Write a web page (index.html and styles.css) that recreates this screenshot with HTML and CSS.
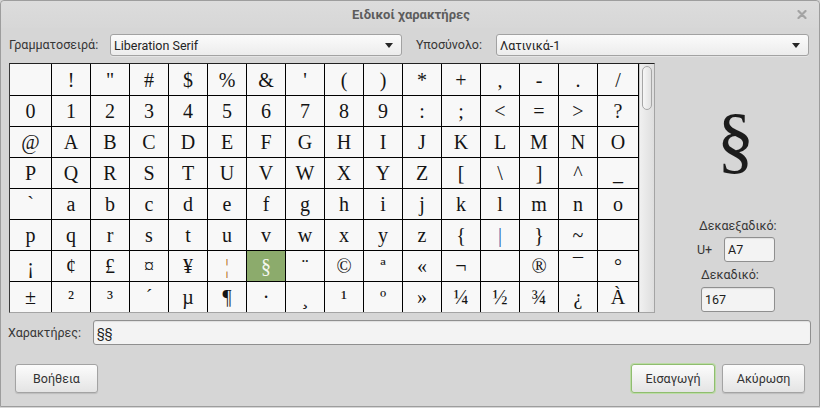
FILE: index.html
```html
<!DOCTYPE html>
<html lang="el">
<head>
<meta charset="utf-8">
<title>Ειδικοί χαρακτήρες</title>
<link rel="stylesheet" href="styles.css">
</head>
<body>
<div class="window">
  <div class="titlebar">
    <span class="title">Ειδικοί χαρακτήρες</span>
    <span class="close"><svg width="10" height="9" viewBox="0 0 10 9"><path d="M1.5 1 L8.5 8 M8.5 1 L1.5 8" stroke="#a3a3a3" stroke-width="2.2" stroke-linecap="round"/></svg></span>
  </div>
  <div class="toprow">
    <span class="lbl lbl-font">Γραμματοσειρά:</span>
    <div class="combo combo-font"><span>Liberation Serif</span><i class="arrow"></i></div>
    <span class="lbl lbl-subset">Υποσύνολο:</span>
    <div class="combo combo-subset"><span>Λατινικά-1</span><i class="arrow"></i></div>
  </div>
  <div class="main">
    <div class="charframe">
      <div class="chargrid">
        <div class="cell"></div><div class="cell">!</div><div class="cell">&quot;</div><div class="cell">#</div><div class="cell">$</div><div class="cell">%</div><div class="cell">&amp;</div><div class="cell">'</div><div class="cell">(</div><div class="cell">)</div><div class="cell">*</div><div class="cell">+</div><div class="cell">,</div><div class="cell">-</div><div class="cell">.</div><div class="cell">/</div>
        <div class="cell">0</div><div class="cell">1</div><div class="cell">2</div><div class="cell">3</div><div class="cell">4</div><div class="cell">5</div><div class="cell">6</div><div class="cell">7</div><div class="cell">8</div><div class="cell">9</div><div class="cell">:</div><div class="cell">;</div><div class="cell">&lt;</div><div class="cell">=</div><div class="cell">&gt;</div><div class="cell">?</div>
        <div class="cell">@</div><div class="cell">A</div><div class="cell">B</div><div class="cell">C</div><div class="cell">D</div><div class="cell">E</div><div class="cell">F</div><div class="cell">G</div><div class="cell">H</div><div class="cell">I</div><div class="cell">J</div><div class="cell">K</div><div class="cell">L</div><div class="cell">M</div><div class="cell">N</div><div class="cell">O</div>
        <div class="cell">P</div><div class="cell">Q</div><div class="cell">R</div><div class="cell">S</div><div class="cell">T</div><div class="cell">U</div><div class="cell">V</div><div class="cell">W</div><div class="cell">X</div><div class="cell">Y</div><div class="cell">Z</div><div class="cell">[</div><div class="cell">\</div><div class="cell">]</div><div class="cell">^</div><div class="cell">_</div>
        <div class="cell">`</div><div class="cell">a</div><div class="cell">b</div><div class="cell">c</div><div class="cell">d</div><div class="cell">e</div><div class="cell">f</div><div class="cell">g</div><div class="cell">h</div><div class="cell">i</div><div class="cell">j</div><div class="cell">k</div><div class="cell">l</div><div class="cell">m</div><div class="cell">n</div><div class="cell">o</div>
        <div class="cell">p</div><div class="cell">q</div><div class="cell">r</div><div class="cell">s</div><div class="cell">t</div><div class="cell">u</div><div class="cell">v</div><div class="cell">w</div><div class="cell">x</div><div class="cell">y</div><div class="cell">z</div><div class="cell">{</div><div class="cell tint-blue">|</div><div class="cell">}</div><div class="cell">~</div><div class="cell"></div>
        <div class="cell">¡</div><div class="cell">¢</div><div class="cell">£</div><div class="cell">¤</div><div class="cell">¥</div><div class="cell tint-orange">¦</div><div class="cell selected">§</div><div class="cell">¨</div><div class="cell">©</div><div class="cell">ª</div><div class="cell">«</div><div class="cell">¬</div><div class="cell"></div><div class="cell">®</div><div class="cell">¯</div><div class="cell">°</div>
        <div class="cell">±</div><div class="cell">²</div><div class="cell">³</div><div class="cell">´</div><div class="cell">µ</div><div class="cell">¶</div><div class="cell">·</div><div class="cell">¸</div><div class="cell">¹</div><div class="cell">º</div><div class="cell">»</div><div class="cell">¼</div><div class="cell">½</div><div class="cell">¾</div><div class="cell">¿</div><div class="cell">À</div>
      </div>
      <div class="scrollbar"><div class="thumb"></div></div>
    </div>
    <div class="side">
      <div class="preview">§</div>
      <span class="lbl lbl-hex">Δεκαεξαδικό:</span>
      <div class="hexrow"><span class="uplus">U+</span><div class="entry entry-hex">A7</div></div>
      <span class="lbl lbl-dec">Δεκαδικό:</span>
      <div class="entry entry-dec">167</div>
    </div>
  </div>
  <div class="charsrow">
    <span class="lbl lbl-chars">Χαρακτήρες:</span>
    <div class="entry entry-chars">§§</div>
  </div>
  <div class="buttons">
    <button class="btn">Βοήθεια</button>
    <span class="spacer"></span>
    <button class="btn btn-default">Εισαγωγή</button>
    <button class="btn">Ακύρωση</button>
  </div>
</div>
</body>
</html>
```

FILE: styles.css
```css
html, body {
  margin: 0;
  padding: 0;
  background: #d6d6d6;
}
body {
  font-family: Roboto, "Noto Sans", "DejaVu Sans", sans-serif;
  font-size: 12.5px;
  color: #363636;
}
.window {
  width: 820px;
  height: 407px;
  box-sizing: border-box;
  border: 1px solid #9d9d9d;
  border-radius: 4px 4px 0 0;
  background: #d6d6d6;
  display: flex;
  flex-direction: column;
}
.titlebar {
  height: 27px;
  display: grid;
  grid-template-columns: 1fr auto 1fr;
  align-items: center;
  background: linear-gradient(#dcdcdc, #d7d7d7);
  border-radius: 4px 4px 0 0;
}
.title {
  grid-column: 2;
  font-weight: bold;
  font-size: 13px;
  color: #5c5c5c;
  padding-left: 2px;
}
.close {
  grid-column: 3;
  justify-self: end;
  margin-right: 12px;
  width: 10px;
  height: 9px;
  display: flex;
}
.toprow {
  margin-top: 6px;
  height: 22px;
  display: flex;
  align-items: center;
  padding-left: 8px;
}
.lbl {
  line-height: 16px;
  white-space: nowrap;
}
.lbl-font { width: 101px; }
.lbl-subset { width: 80px; margin-left: 14px; }
.combo {
  box-sizing: border-box;
  height: 22px;
  border: 1px solid #a2a2a2;
  border-radius: 3px;
  background: linear-gradient(#fbfbfb, #ececec);
  display: flex;
  align-items: center;
  justify-content: space-between;
  padding: 0 8px 0 3px;
  color: #242424;
  box-shadow: 0 1px 0 rgba(255,255,255,0.35);
}
.combo-font { width: 292px; }
.combo-subset { width: 313px; }
.arrow {
  width: 0;
  height: 0;
  border-left: 4px solid transparent;
  border-right: 4px solid transparent;
  border-top: 5px solid #262626;
  margin-top: 1px;
}
.main {
  margin-top: 7px;
  height: 250px;
  display: flex;
  padding-left: 8px;
}
.charframe {
  display: flex;
  border: 1px solid #a4a4a4;
  border-top-color: #222;
  border-left-color: #3a3a3a;
}
.chargrid {
  display: grid;
  grid-template-columns: 42px repeat(14, 39px) 41px;
  grid-template-rows: 32px repeat(6, 31px) 30px;
  background: #f8f8f8;
}
.cell {
  box-sizing: border-box;
  border-right: 1px solid #000;
  border-bottom: 1px solid #000;
  display: flex;
  align-items: center;
  justify-content: center;
  font-family: "Liberation Serif", "Times New Roman", serif;
  font-size: 20px;
  color: #141414;
  padding-top: 1px;
}
.cell:nth-child(n+113) { border-bottom: 0; }
.cell.selected {
  background: #8cab6c;
  color: #f4f7f0;
}
.tint-blue { color: #2c63a8; }
.tint-orange { color: #b7782c; }
.scrollbar {
  width: 15px;
  box-sizing: border-box;
  background: linear-gradient(to right, #f0f0f0, #dedede);
  border-left: 1px solid #c8c8c8;
  padding: 2px 2px 0 2px;
}
.thumb {
  height: 44px;
  box-sizing: border-box;
  border: 1px solid #a6a6a6;
  border-radius: 5px;
  background: linear-gradient(to right, #f6f6f6, #e2e2e2);
}
.side {
  flex: 1;
  display: flex;
  flex-direction: column;
  align-items: flex-start;
}
.preview {
  align-self: stretch;
  margin-top: 38px;
  height: 75px;
  padding-right: 3px;
  text-align: center;
  font-family: "Liberation Serif", "Times New Roman", serif;
  font-size: 75px;
  line-height: 75px;
  color: #1c1c1c;
}
.lbl-hex { margin-left: 44px; margin-top: 42px; }
.hexrow {
  margin-left: 42px;
  margin-top: 3px;
  display: flex;
  align-items: center;
}
.uplus { width: 27px; }
.lbl-dec { margin-left: 46px; margin-top: 5px; }
.entry {
  box-sizing: border-box;
  height: 25px;
  border: 1px solid #8f8f8f;
  border-radius: 3px;
  background: #f3f3f3;
  box-shadow: inset 0 1px 1px rgba(0,0,0,0.08);
  padding-left: 3px;
  display: flex;
  align-items: center;
  color: #202020;
}
.entry-hex { width: 51px; }
.entry-dec { width: 74px; margin-left: 46px; margin-top: 4px; }
.charsrow {
  margin-top: 7px;
  height: 25px;
  display: flex;
  align-items: center;
  padding-left: 7px;
}
.lbl-chars { width: 85px; }
.entry-chars { width: 718px; }
.buttons {
  margin-top: 19px;
  height: 29px;
  display: flex;
  padding: 0 14px;
  gap: 7px;
}
.spacer { flex: 1; }
.btn {
  box-sizing: border-box;
  height: 29px;
  width: 83px;
  border: 1px solid #a3a3a3;
  border-radius: 3px;
  background: linear-gradient(#fcfcfc, #e4e4e4);
  font-family: Roboto, "Noto Sans", "DejaVu Sans", sans-serif;
  font-size: 12.5px;
  color: #333;
  padding: 0;
  box-shadow: 0 1px 1px rgba(0,0,0,0.12);
}
.btn-default {
  width: 84px;
  border-color: #8fbd6f;
  box-shadow: 0 0 0 1px #bcdba6;
}
```
